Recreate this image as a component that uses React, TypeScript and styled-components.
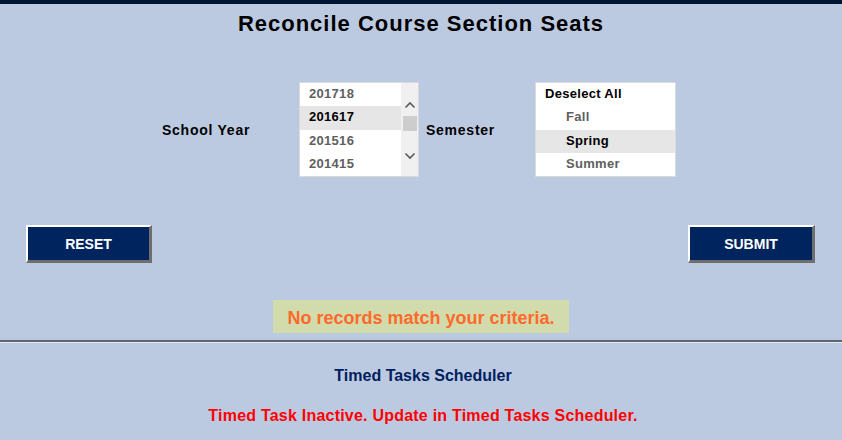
import { FC } from 'react';
import styled, { createGlobalStyle } from 'styled-components';

const GlobalStyle = createGlobalStyle`
  html, body {
    margin: 0;
    padding: 0;
    background: #bccae1;
    font-family: "Liberation Sans", Arial, sans-serif;
  }
`;

const Page = styled.div`
  width: 842px;
  min-height: 440px;
  display: flex;
  flex-direction: column;
`;

const TopBar = styled.div`
  height: 4px;
  background: #001532;
`;

const Title = styled.h1`
  margin: 7px 0 0;
  font-size: 22px;
  line-height: 26px;
  letter-spacing: 1px;
  font-weight: bold;
  text-align: center;
  color: #000;
`;

const CriteriaRow = styled.div`
  margin-top: 45px;
  display: flex;
  justify-content: center;
  align-items: center;
  padding-right: 4px;
`;

const FieldLabel = styled.div<{ width: number; indent?: number }>`
  width: ${({ width }) => width}px;
  padding-left: ${({ indent }) => indent || 0}px;
  font-size: 14px;
  font-weight: bold;
  letter-spacing: 0.75px;
  color: #000;
`;

const ListBox = styled.div<{ width: number }>`
  width: ${({ width }) => width}px;
  height: 95px;
  box-sizing: border-box;
  border: 1px solid #dadada;
  background: #fff;
  display: flex;
`;

const Options = styled.div`
  flex: 1;
  display: flex;
  flex-direction: column;
`;

const Option = styled.div<{ selected?: boolean; indent: number; strong?: boolean }>`
  height: 23.25px;
  line-height: 21px;
  padding-left: ${({ indent }) => indent}px;
  font-size: 13px;
  font-weight: bold;
  letter-spacing: 0.3px;
  color: ${({ selected, strong }) => (selected || strong ? '#000' : '#606060')};
  background: ${({ selected }) => (selected ? '#e6e6e6' : 'transparent')};
`;

const ScrollTrack = styled.div`
  width: 17px;
  background: #f0f0f0;
  display: flex;
  flex-direction: column;
  align-items: center;
  padding-top: 18px;
  box-sizing: border-box;
`;

const Thumb = styled.div`
  width: 14px;
  height: 15px;
  margin: 7px 0 21px;
  background: #cdcdcd;
`;

const Chevron: FC<{ down?: boolean }> = ({ down }) => (
  <svg width="12" height="8" viewBox="0 0 12 8">
    <polyline
      points={down ? '1.5,1.5 6,6 10.5,1.5' : '1.5,6.5 6,2 10.5,6.5'}
      fill="none"
      stroke="#5a5a5a"
      strokeWidth="1.6"
    />
  </svg>
);

const ButtonRow = styled.div`
  margin-top: 48px;
  display: flex;
  justify-content: space-between;
  padding: 0 27px 0 26px;
`;

const ActionButton = styled.button<{ width: number }>`
  width: ${({ width }) => width}px;
  height: 38px;
  box-sizing: border-box;
  background: #00245e;
  border-style: solid;
  border-width: 2px 3px 3px 2px;
  border-color: #fff #6e6e6e #6e6e6e #fff;
  color: #fff;
  font-family: "Liberation Sans", Arial, sans-serif;
  font-size: 14px;
  font-weight: bold;
  cursor: pointer;
`;

const Message = styled.div`
  margin: 37px auto 0;
  width: 296px;
  height: 33px;
  box-sizing: border-box;
  padding-top: 3px;
  line-height: 30px;
  text-align: center;
  background: #d2dbab;
  color: #ff6a2c;
  font-size: 18px;
  font-weight: bold;
`;

const Divider = styled.hr`
  margin: 7px 0 0;
  border: none;
  border-top: 2px solid #60656f;
  border-bottom: 1px solid #e3e8f1;
`;

const SchedulerLink = styled.div`
  margin-top: 23px;
  padding-left: 4px;
  font-size: 16px;
  line-height: 19px;
  font-weight: bold;
  text-align: center;
  color: #002060;
`;

const StatusLine = styled.div`
  margin-top: 21px;
  padding-left: 4px;
  font-size: 16px;
  line-height: 19px;
  letter-spacing: 0.22px;
  font-weight: bold;
  text-align: center;
  color: #ff0000;
`;

const years = ['201718', '201617', '201516', '201415'];
const semesters = ['Fall', 'Spring', 'Summer'];

export default function App() {
  return (
    <Page>
      <GlobalStyle />
      <TopBar />
      <Title>Reconcile Course Section Seats</Title>

      <CriteriaRow>
        <FieldLabel width={137}>School Year</FieldLabel>
        <ListBox width={120}>
          <Options>
            {years.map((y) => (
              <Option key={y} indent={9} selected={y === '201617'}>
                {y}
              </Option>
            ))}
          </Options>
          <ScrollTrack>
            <Chevron />
            <Thumb />
            <Chevron down />
          </ScrollTrack>
        </ListBox>
        <FieldLabel width={109} indent={7}>Semester</FieldLabel>
        <ListBox width={141}>
          <Options>
            <Option indent={9} strong>
              Deselect All
            </Option>
            {semesters.map((s) => (
              <Option key={s} indent={30} selected={s === 'Spring'}>
                {s}
              </Option>
            ))}
          </Options>
        </ListBox>
      </CriteriaRow>

      <ButtonRow>
        <ActionButton width={126}>RESET</ActionButton>
        <ActionButton width={127}>SUBMIT</ActionButton>
      </ButtonRow>

      <Message>No records match your criteria.</Message>
      <Divider />
      <SchedulerLink>Timed Tasks Scheduler</SchedulerLink>
      <StatusLine>Timed Task Inactive. Update in Timed Tasks Scheduler.</StatusLine>
    </Page>
  );
}
